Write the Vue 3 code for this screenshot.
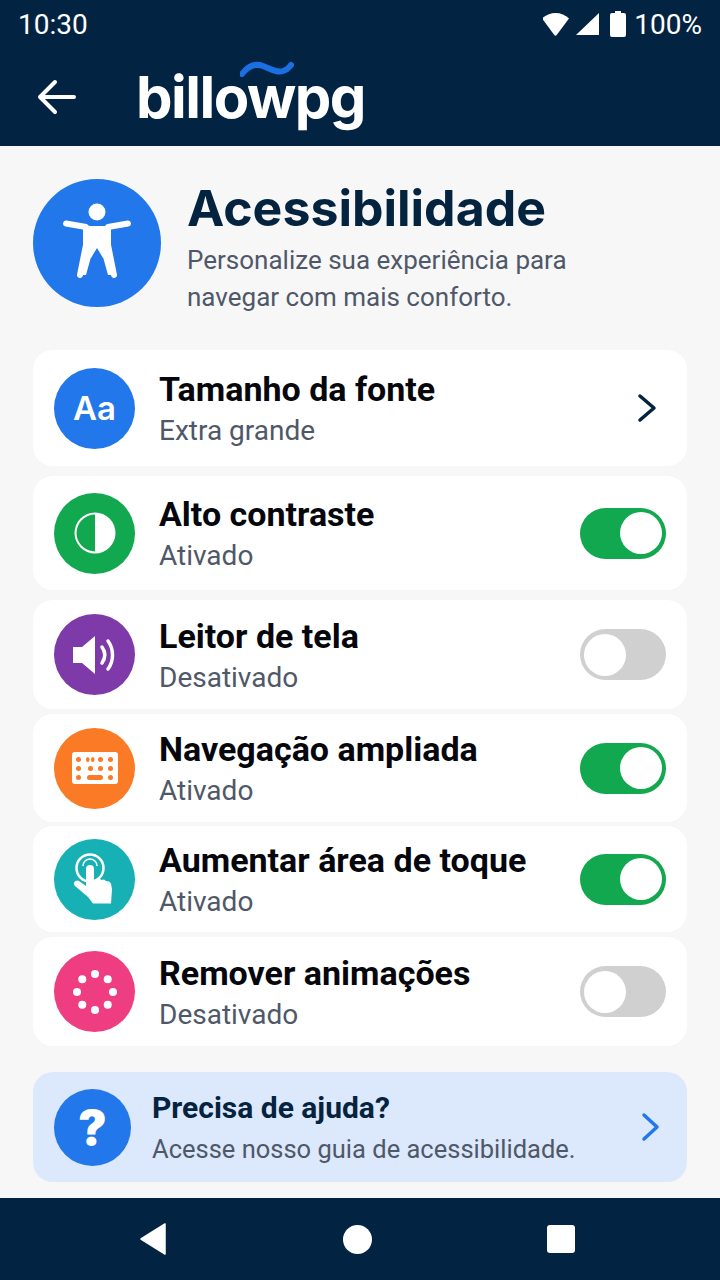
<template>
  <div class="screen">
    <header class="top">
      <div class="status">
        <span>10:30</span>
        <div class="status-right">
          <svg width="28" height="24" viewBox="0 0 28 24"><path d="M0 6.5C3.5 3 8.5 1 13.5 1S23.500 3 27 6.500L14.700 23a1.500 1.500 0 0 1-2.400 0z" fill="#fff" transform="translate(-1 0)" /></svg>
          <svg width="26" height="24" viewBox="0 0 26 24"><path d="M24 1v22H1z" fill="#fff" /></svg>
          <svg class="batt" width="16" height="26" viewBox="0 0 16 26"><path d="M5 0h6v2h3a2 2 0 0 1 2 2v20a2 2 0 0 1-2 2H2a2 2 0 0 1-2-2V4a2 2 0 0 1 2-2h3z" fill="#fff" /></svg>
          <span class="pct">100%</span>
        </div>
      </div>
      <div class="toolbar">
        <svg class="back" width="42" height="38" viewBox="0 0 42 38"><path d="M38 19H4M19 4 4 19l15 15" fill="none" stroke="#fff" stroke-width="4" stroke-linecap="round" stroke-linejoin="round" /></svg>
        <div class="logo">
          billowpg
          <svg class="wave" width="54" height="18" viewBox="0 0 54 18"><path d="M2 14C8 6 15 3 23 6s14 7 20 5 6-4 8-6" fill="none" stroke="#1c6fe3" stroke-width="6" stroke-linecap="round" /></svg>
        </div>
      </div>
    </header>

    <main class="content">
      <section class="intro">
        <div class="intro-icon">
          <svg width="70" height="80" viewBox="0 0 70 80">
            <circle cx="35" cy="10" r="8.500" fill="#fff" />
            <path d="M4 21.500 24 25v18l-6 30M66 21.500 46 25v18l6 30" fill="none" stroke="#fff" stroke-width="6" stroke-linecap="round" stroke-linejoin="round" />
            <path d="M24 24h22v22l3 10h-8l-6-10-6 10h-8l3-10z" fill="#fff" />
            <path d="M23 44h9l-8 29h-6zM47 44h-9l8 29h6z" fill="#fff" />
          </svg>
        </div>
        <div>
          <h1>Acessibilidade</h1>
          <p>Personalize sua experiência para<br />navegar com mais conforto.</p>
        </div>
      </section>

      <div class="list">
        <div v-for="item in items" :key="item.title" class="card" :style="{ height: item.h + 'px', marginBottom: item.gap + 'px' }">
          <div class="circle" :style="{ background: item.color }">
            <span v-if="item.icon === 'font'" class="aa">Aa</span>
            <svg v-else-if="item.icon === 'contrast'" width="46" height="46" viewBox="0 0 46 46">
              <circle cx="23" cy="23" r="20.500" fill="#fff" />
              <path d="M23 4.500a18.500 18.500 0 0 0 0 37z" fill="#12a84f" />
            </svg>
            <svg v-else-if="item.icon === 'sound'" width="46" height="42" viewBox="0 0 46 42">
              <path d="M1 13h9L23 2v38L10 29H1z" fill="#fff" />
              <path d="M30 13c3.500 5 3.500 11 0 16M36 7c6 8 6 20 0 28" fill="none" stroke="#fff" stroke-width="3.500" stroke-linecap="round" />
            </svg>
            <svg v-else-if="item.icon === 'keyboard'" width="46" height="32" viewBox="0 0 46 32">
              <rect width="46" height="32" rx="3" fill="#fff" />
              <g fill="#fb7a25">
                <rect v-for="k in keys" :key="k.join()" :x="k[0]" :y="k[1]" :width="k[2]" height="5" rx="2.500" />
              </g>
            </svg>
            <svg v-else-if="item.icon === 'touch'" width="46" height="52" viewBox="0 0 46 52">
              <circle cx="18" cy="15" r="13.500" fill="none" stroke="#fff" stroke-width="2.500" />
              <path d="M11 13a7 7 0 0 1 14 0" fill="none" stroke="#fff" stroke-width="1.500" />
              <path d="M14 16a4 4 0 0 1 8 0v11l3-1 1 0 2 0 1.500 1 2.500-.5 2 1.500 3 .5 2 2 1 6-1 14H21L16 44 3 33c-3-3 1-7 4-5l7 5z" fill="#fff" />
            </svg>
            <svg v-else width="44" height="44" viewBox="0 0 44 44" fill="#fff">
              <circle v-for="d in dots" :key="d[0] + '-' + d[1]" :cx="d[0]" :cy="d[1]" r="4" />
            </svg>
          </div>
          <div class="texts">
            <div class="title">{{ item.title }}</div>
            <div class="sub">{{ item.sub }}</div>
          </div>
          <svg v-if="item.chevron" class="chev" width="22" height="30" viewBox="0 0 22 30"><path d="M4 3 18 15 4 27" fill="none" stroke="#04233f" stroke-width="3.500" stroke-linecap="round" stroke-linejoin="round" /></svg>
          <div v-else class="switch" :class="{ on: item.on }"><span class="knob"></span></div>
        </div>
      </div>

      <div class="help">
        <div class="help-icon">?</div>
        <div class="help-text">
          <div class="help-title">Precisa de ajuda?</div>
          <div class="help-sub">Acesse nosso guia de acessibilidade.</div>
        </div>
        <svg class="help-chev" width="20" height="30" viewBox="0 0 20 30"><path d="M3 3 16 15 3 27" fill="none" stroke="#2277ea" stroke-width="3.500" stroke-linecap="round" stroke-linejoin="round" /></svg>
      </div>
    </main>

    <nav class="navbar">
      <svg width="28" height="32" viewBox="0 0 28 32"><path d="M26 1v30L2 16z" fill="#fff" stroke="#fff" stroke-width="1.500" stroke-linejoin="round" /></svg>
      <span class="home"></span>
      <span class="square"></span>
    </nav>
  </div>
</template>

<script setup>
const items = [
  { title: "Tamanho da fonte", sub: "Extra grande", icon: "font", color: "#2277ea", chevron: true, h: 116, gap: 10 },
  { title: "Alto contraste", sub: "Ativado", icon: "contrast", color: "#12a84f", on: true, h: 114, gap: 10 },
  { title: "Leitor de tela", sub: "Desativado", icon: "sound", color: "#7d3aa8", on: false, h: 109, gap: 5 },
  { title: "Navegação ampliada", sub: "Ativado", icon: "keyboard", color: "#fb7a25", on: true, h: 108, gap: 4 },
  { title: "Aumentar área de toque", sub: "Ativado", icon: "touch", color: "#17b0b4", on: true, h: 106, gap: 5 },
  { title: "Remover animações", sub: "Desativado", icon: "dots", color: "#ee3d80", on: false, h: 109, gap: 0 },
];

const keys = [
  [4, 5, 5], [14, 5, 3.5], [19, 5, 3.5], [26, 5, 5], [36, 5, 5],
  [4, 14, 5], [16, 14, 5], [26, 14, 5], [36, 14, 5],
  [4, 23, 5], [15, 23, 16], [36, 23, 5],
];

// eight dots on a ring
const dots = Array.from({ length: 8 }, (_, i) => {
  const a = (i * Math.PI) / 4;
  return [22 + 18 * Math.cos(a), 22 + 18 * Math.sin(a)];
});
</script>

<style>
body {
  background: #f7f7f8;
}
</style>

<style scoped>
.screen {
  width: 720px;
  height: 1280px;
  display: flex;
  flex-direction: column;
  background: #f7f7f8;
  font-family: Roboto, "Noto Sans", sans-serif;
  overflow: hidden;
}

.top {
  height: 146px;
  background: #022341;
  color: #fff;
}

.status {
  height: 48px;
  padding: 0 18px;
  display: flex;
  align-items: center;
  justify-content: space-between;
  font-size: 28px;
}

.status-right {
  display: flex;
  align-items: center;
  gap: 4px;
}

.batt {
  margin: 0 0 0 5px;
}

.pct {
  margin-left: 4px;
}

.toolbar {
  height: 98px;
  padding: 0 0 6px 36px;
  display: flex;
  align-items: center;
  gap: 58px;
}

.logo {
  position: relative;
  font-family: Inter, Roboto, sans-serif;
  font-size: 58px;
  font-weight: 700;
  letter-spacing: -1.500px;
  line-height: 1;
}

.wave {
  position: absolute;
  left: 104px;
  top: -8px;
}

.content {
  flex: 1;
  padding: 33px 33px 16px;
  display: flex;
  flex-direction: column;
}

.intro {
  display: flex;
  gap: 26px;
  height: 171px;
}

.intro-icon {
  width: 128px;
  height: 128px;
  border-radius: 50%;
  background: #2277ea;
  display: flex;
  align-items: center;
  justify-content: center;
  padding-bottom: 2px;
  box-sizing: border-box;
}

h1 {
  margin: 0;
  font-family: Inter, Roboto, sans-serif;
  font-size: 50px;
  line-height: 58px;
  font-weight: 700;
  color: #04233f;
}

.intro p {
  margin: 5px 0 0;
  font-size: 26px;
  line-height: 37px;
  color: #4f5868;
}

.card {
  display: flex;
  align-items: center;
  background: #fff;
  border-radius: 20px;
  padding: 0 21px;
  box-sizing: border-box;
}

.circle {
  width: 81px;
  height: 81px;
  border-radius: 50%;
  flex-shrink: 0;
  display: flex;
  align-items: center;
  justify-content: center;
}

.aa {
  color: #fff;
  font-family: Inter, Roboto, sans-serif;
  font-size: 33px;
  font-weight: 600;
}

.texts {
  flex: 1;
  margin-left: 24px;
}

.title {
  font-size: 34px;
  line-height: 44px;
  font-weight: 700;
  color: #05070c;
}

.sub {
  font-size: 28px;
  line-height: 36px;
  margin-top: 2px;
  color: #4f5868;
}

.chev {
  margin-right: 8px;
}

.switch {
  width: 86px;
  height: 51px;
  border-radius: 26px;
  background: #d0d0d0;
  display: flex;
  align-items: center;
  padding: 0 4px;
  box-sizing: border-box;
}

.switch.on {
  background: #12a84f;
  justify-content: flex-end;
}

.knob {
  width: 42px;
  height: 42px;
  border-radius: 50%;
  background: #fff;
}

.help {
  margin-top: 26px;
  height: 110px;
  background: #dce8fb;
  border-radius: 20px;
  padding: 0 26px 0 21px;
  box-sizing: border-box;
  display: flex;
  align-items: center;
  gap: 21px;
}

.help-icon {
  width: 77px;
  height: 77px;
  border-radius: 50%;
  background: #2277ea;
  color: #fff;
  font-size: 48px;
  font-weight: 900;
  font-family: Inter, Roboto, sans-serif;
  display: flex;
  align-items: center;
  justify-content: center;
}

.help-text {
  flex: 1;
}

.help-title {
  font-size: 30px;
  line-height: 38px;
  font-weight: 700;
  color: #04233f;
}

.help-sub {
  font-size: 25.500px;
  line-height: 34px;
  margin-top: 5px;
  color: #4f5868;
}

.navbar {
  height: 82px;
  background: #022341;
  display: flex;
  align-items: center;
  justify-content: space-between;
  padding: 0 145px 0 139px;
}

.home {
  width: 29px;
  height: 29px;
  border-radius: 50%;
  background: #fff;
}

.square {
  width: 28px;
  height: 28px;
  border-radius: 3px;
  background: #fff;
}
</style>
